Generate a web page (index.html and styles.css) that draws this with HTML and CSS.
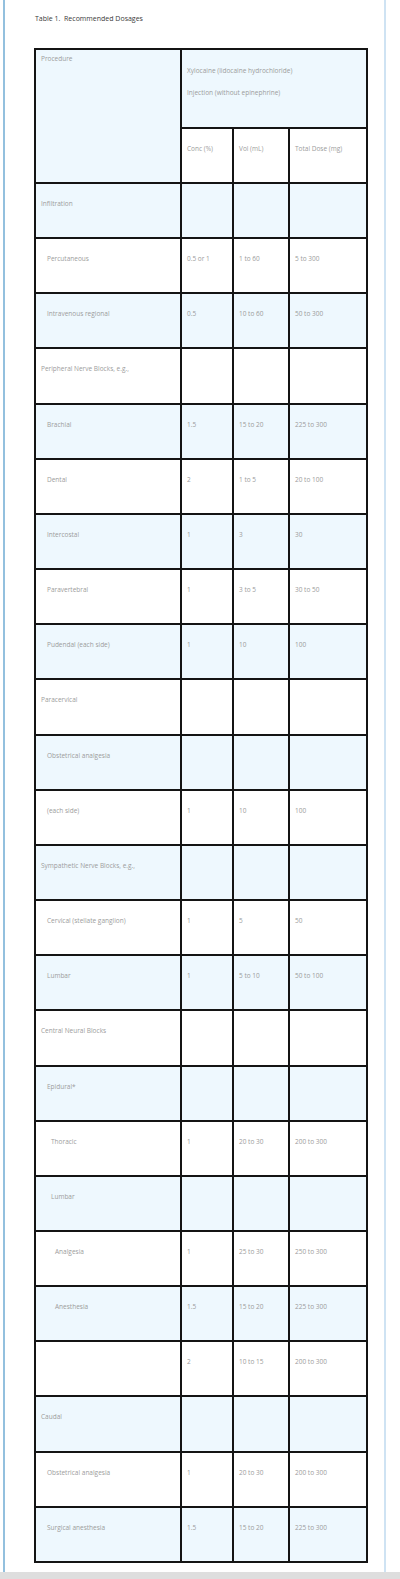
FILE: index.html
```html
<!DOCTYPE html>
<html>
<head>
<meta charset="utf-8">
<link rel="stylesheet" href="styles.css">
</head>
<body>
<div class="page">
  <div class="title">Table 1.&nbsp; Recommended Dosages</div>
  <table class="dosage">
    <colgroup>
      <col class="c1"><col class="c2"><col class="c3"><col class="c4">
    </colgroup>
    <tr class="h1 blue">
      <td rowspan="2" class="proc">Procedure</td>
      <td colspan="3" class="xylo"><div>Xylocaine (lidocaine hydrochloride)</div><div class="inj">Injection (without epinephrine)</div></td>
    </tr>
    <tr class="h2">
      <td>Conc (%)</td><td>Vol (mL)</td><td>Total Dose (mg)</td>
    </tr>
    <tr class="blue"><td>Infiltration</td><td></td><td></td><td></td></tr>
    <tr><td class="i1">Percutaneous</td><td>0.5 or 1</td><td>1 to 60</td><td>5 to 300</td></tr>
    <tr class="blue"><td class="i1">Intravenous regional</td><td>0.5</td><td>10 to 60</td><td>50 to 300</td></tr>
    <tr><td>Peripheral Nerve Blocks, e.g.,</td><td></td><td></td><td></td></tr>
    <tr class="blue"><td class="i1">Brachial</td><td>1.5</td><td>15 to 20</td><td>225 to 300</td></tr>
    <tr><td class="i1">Dental</td><td>2</td><td>1 to 5</td><td>20 to 100</td></tr>
    <tr class="blue"><td class="i1">Intercostal</td><td>1</td><td>3</td><td>30</td></tr>
    <tr><td class="i1">Paravertebral</td><td>1</td><td>3 to 5</td><td>30 to 50</td></tr>
    <tr class="blue"><td class="i1">Pudendal (each side)</td><td>1</td><td>10</td><td>100</td></tr>
    <tr><td>Paracervical</td><td></td><td></td><td></td></tr>
    <tr class="blue"><td class="i1">Obstetrical analgesia</td><td></td><td></td><td></td></tr>
    <tr><td class="i1">(each side)</td><td>1</td><td>10</td><td>100</td></tr>
    <tr class="blue"><td>Sympathetic Nerve Blocks, e.g.,</td><td></td><td></td><td></td></tr>
    <tr><td class="i1">Cervical (stellate ganglion)</td><td>1</td><td>5</td><td>50</td></tr>
    <tr class="blue"><td class="i1">Lumbar</td><td>1</td><td>5 to 10</td><td>50 to 100</td></tr>
    <tr><td>Central Neural Blocks</td><td></td><td></td><td></td></tr>
    <tr class="blue"><td class="i1">Epidural*</td><td></td><td></td><td></td></tr>
    <tr><td class="i2">Thoracic</td><td>1</td><td>20 to 30</td><td>200 to 300</td></tr>
    <tr class="blue"><td class="i2">Lumbar</td><td></td><td></td><td></td></tr>
    <tr><td class="i3">Analgesia</td><td>1</td><td>25 to 30</td><td>250 to 300</td></tr>
    <tr class="blue"><td class="i3">Anesthesia</td><td>1.5</td><td>15 to 20</td><td>225 to 300</td></tr>
    <tr><td></td><td>2</td><td>10 to 15</td><td>200 to 300</td></tr>
    <tr class="blue"><td>Caudal</td><td></td><td></td><td></td></tr>
    <tr><td class="i1">Obstetrical analgesia</td><td>1</td><td>20 to 30</td><td>200 to 300</td></tr>
    <tr class="blue"><td class="i1">Surgical anesthesia</td><td>1.5</td><td>15 to 20</td><td>225 to 300</td></tr>
  </table>
</div>
<div class="statusbar"></div>
</body>
</html>
```
FILE: styles.css
```css
html, body {
  margin: 0;
  padding: 0;
  background: #ffffff;
}
body {
  font-family: "Open Sans", "DejaVu Sans", sans-serif;
  width: 400px;
}
.page {
  margin-left: 3px;
  width: 379px;
  height: 1572px;
  border-left: 2px solid #93c0de;
  border-right: 2px solid #cfe3f3;
  box-sizing: content-box;
  overflow: hidden;
}
.title {
  padding-left: 30px;
  padding-top: 14px;
  font-size: 7px;
  line-height: 10px;
  color: #3a3a3a;
  height: 10px;
}
.dosage {
  margin-top: 24px;
  margin-left: 29px;
  border-collapse: separate;
  border-spacing: 0;
  border-top: 2px solid #141414;
  border-left: 2px solid #141414;
  table-layout: fixed;
  width: 334px;
}
.c1 { width: 146px; }
.c2 { width: 52px; }
.c3 { width: 56px; }
.c4 { width: 78px; }
.dosage td {
  border-right: 2px solid #141414;
  border-bottom: 2px solid #141414;
  vertical-align: top;
  padding: 15px 4px 0 5px;
  font-size: 6.5px;
  line-height: 9px;
  color: #9c9c9c;
  white-space: nowrap;
  overflow: hidden;
}
.dosage tr {
  height: 55.16px;
}
.dosage tr.h1 {
  height: 79px;
}
.dosage tr.h2 {
  height: 55px;
}
.dosage tr.blue td {
  background: #eef8fe;
}
.dosage tr.h2 td {
  background: #ffffff;
}
.dosage td.proc {
  padding-top: 4px;
  background: #eef8fe;
}
.dosage td.xylo {
  padding-top: 16px;
}
.xylo .inj {
  margin-top: 13px;
}
.dosage td.i1 { padding-left: 11px; }
.dosage td.i2 { padding-left: 15px; }
.dosage td.i3 { padding-left: 19px; }
.statusbar {
  height: 7px;
  background: #dedede;
}
```
